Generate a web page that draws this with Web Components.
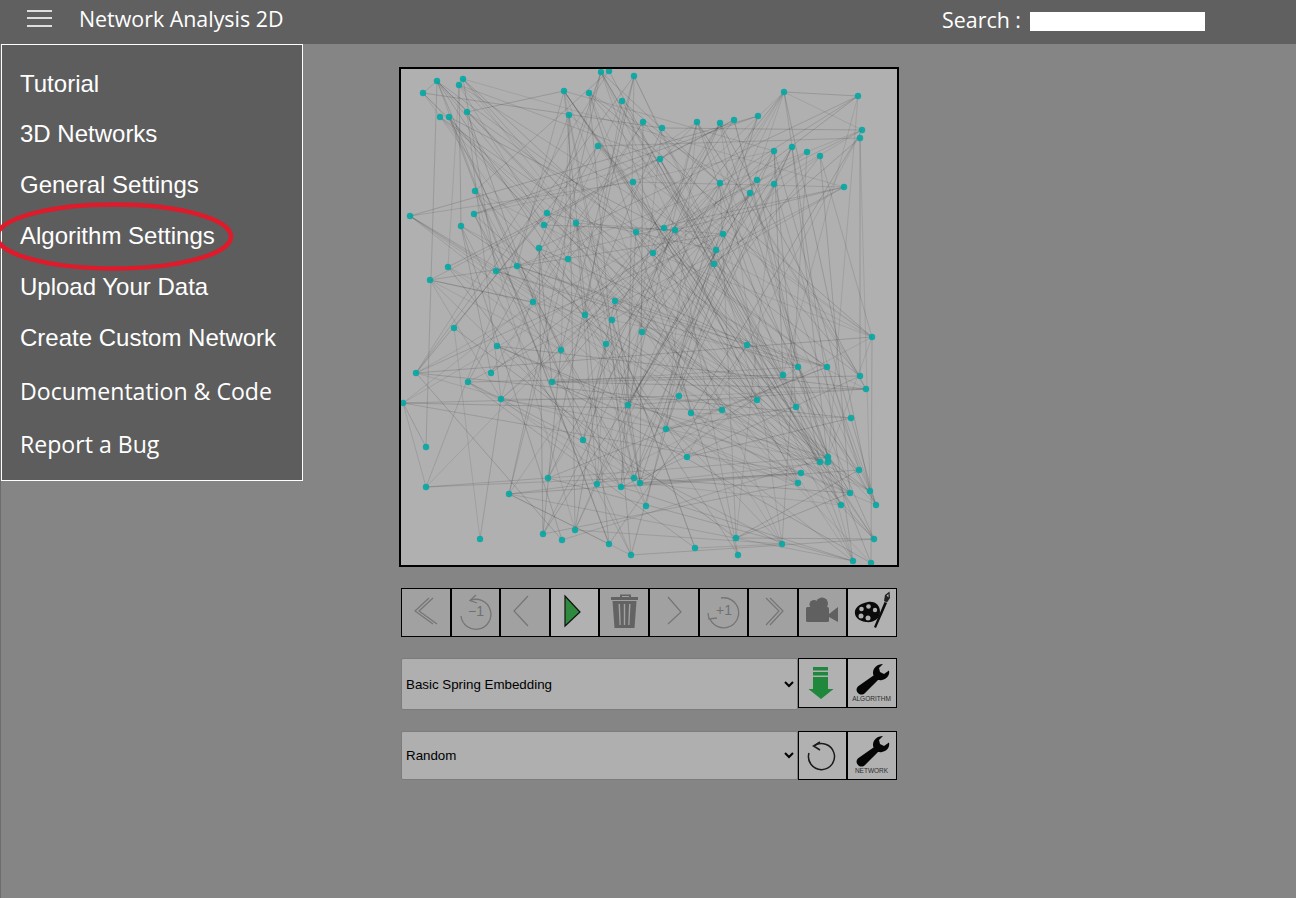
<!DOCTYPE html>
<html>
<head>
<meta charset="utf-8">
<title>Network Analysis 2D</title>
<style>
  html, body { margin: 0; height: 100%; background: #858585; }
</style>
</head>
<body>
<na-app>
  <na-header slot="header" title-text="Network Analysis 2D"></na-header>
  <na-menu slot="menu">
    <na-menu-item>Tutorial</na-menu-item>
    <na-menu-item>3D Networks</na-menu-item>
    <na-menu-item>General Settings</na-menu-item>
    <na-menu-item>Algorithm Settings</na-menu-item>
    <na-menu-item>Upload Your Data</na-menu-item>
    <na-menu-item>Create Custom Network</na-menu-item>
    <na-menu-item alt>Documentation &amp; Code</na-menu-item>
    <na-menu-item alt>Report a Bug</na-menu-item>
  </na-menu>
  <na-network></na-network>
  <na-toolbar>
    <na-tool-button icon="first"></na-tool-button>
    <na-tool-button icon="back1"></na-tool-button>
    <na-tool-button icon="prev"></na-tool-button>
    <na-tool-button icon="play" active></na-tool-button>
    <na-tool-button icon="trash"></na-tool-button>
    <na-tool-button icon="next"></na-tool-button>
    <na-tool-button icon="fwd1"></na-tool-button>
    <na-tool-button icon="last"></na-tool-button>
    <na-tool-button icon="camera"></na-tool-button>
    <na-tool-button icon="palette" active></na-tool-button>
  </na-toolbar>
  <na-select-row value="Basic Spring Embedding" select-height="52">
    <na-tool-button icon="download" active></na-tool-button>
    <na-tool-button icon="wrench" label="ALGORITHM" active></na-tool-button>
  </na-select-row>
  <na-select-row value="Random" select-height="49">
    <na-tool-button icon="undo" active></na-tool-button>
    <na-tool-button icon="wrench" label="NETWORK" active></na-tool-button>
  </na-select-row>
</na-app>

<script>
// icon drawings, 47x47 box
const ICONS = {
  first: `<g fill="none" stroke="#757575" stroke-width="1.2"><path d="M27 9 L13 22 L31 35"/><path d="M31 9 L17 22 L35 35"/></g>`,
  back1: `<g fill="none" stroke="#757575" stroke-width="1.3" transform="translate(-1 0)"><path d="M19 11.500 A15 15 0 1 1 10 27"/><path d="M25 6 L19 11.500 L26 14"/></g><text x="24" y="27" text-anchor="middle" font-family="'Liberation Sans',sans-serif" font-size="14" fill="#707070">−1</text>`,
  prev: `<path d="M27 7 L13 22 L27 37" fill="none" stroke="#757575" stroke-width="1.2"/>`,
  play: `<path d="M14 7 L29 23 L14 37 Z" fill="#2f8a3f" stroke="#111" stroke-width="1.2"/>`,
  trash: `<g fill="#636363"><path d="M19 8 V5.500 H30 V8 H37 V11 H10 V8 Z M21 8 H28 V7 H21 Z" fill-rule="evenodd"/><path d="M11.500 12 H35.500 L33.500 39 H13.500 Z M17.500 15 L18.500 36 H19.800 L19 15 Z M22.800 15 V36 H24.200 V15 Z M28 15 L27.200 36 H28.500 L29.500 15 Z" fill-rule="evenodd"/></g>`,
  next: `<path d="M18 8 L31 23 L18 35" fill="none" stroke="#757575" stroke-width="1.2"/>`,
  fwd1: `<g fill="none" stroke="#757575" stroke-width="1.3" transform="translate(-1 0)"><path d="M22 9 A15 15 0 1 1 11 30"/><path d="M9 24 L10 30 L18 29"/></g><text x="24" y="26" text-anchor="middle" font-family="'Liberation Sans',sans-serif" font-size="14" fill="#707070">+1</text>`,
  last: `<g fill="none" stroke="#757575" stroke-width="1.2"><path d="M17 9 L30 22 L17 36"/><path d="M21 9 L34 22 L21 36"/></g>`,
  camera: `<g fill="#606060"><circle cx="15" cy="15.500" r="4.500"/><circle cx="23" cy="14.500" r="6"/><rect x="7" y="18" width="23" height="15" rx="1.500"/><path d="M30 25 L39 18 V33 L30 28 Z"/></g>`,
  palette: `<path d="M19 13 C27 12 31 17 31 23 C31 30 24 34 17 33 C9 32 5 27 6 22 C7 17 13 14 19 13 Z" fill="#0b0b0b"/><g fill="#b1b1b1"><circle cx="12.500" cy="20" r="2.300"/><circle cx="19.500" cy="17.500" r="2.300"/><circle cx="26" cy="21" r="2.200"/><circle cx="12" cy="27" r="2.500"/><circle cx="19" cy="29" r="2.500"/></g><path d="M25 38 L35.500 13 L38 14 L27 39 Z" fill="#0b0b0b"/><path d="M35 12 L36 6 L40.500 2.500 L41 9 L38 13.500 Z" fill="#222"/><path d="M37.500 6.500 L39.500 5 L39.500 8.500 Z" fill="#b1b1b1"/>`,
  download: `<g fill="#20883c"><rect x="14" y="7" width="15" height="3.500"/><rect x="14" y="12" width="15" height="3.500"/><path d="M14 17 H29 V29 H34.500 L22 39 L9.500 29 H14 Z"/></g>`,
  undo: `<g fill="none" stroke="#1a1a1a" stroke-width="1.500"><path d="M15 14 A13 13 0 1 1 10 21"/><path d="M21 10 L14.500 14 L21 18"/></g>`,
  wrench: `<path d="M34 4 C28 4 24 8 24 13 C24 14 24.500 15 24.500 15.500 L9.500 26 C7 28 7 31 9 33 C11 35 14 35 16 33 L29 20 C30 20 31 20.500 33 20 C38 19 41 15 40 10.500 L35 14 L31 12 L30 8 Z" fill="#050505"/>`
}

class NaApp extends HTMLElement {
  constructor() {
    super()
    this.attachShadow({ mode: 'open' })
    this.shadowRoot.innerHTML = `
      <style>
        :host { display: block; position: relative; height: 898px; overflow: hidden; background: #858585;
          box-shadow: inset 1px 0 0 #6c6c6c; }
        main { display: flex; flex-direction: column; width: 496px; margin: 23px 0 0 401px; }
        ::slotted(na-toolbar) { margin-top: 21px; }
        ::slotted(na-select-row) { margin-top: 21px; }
        ::slotted(na-network) { margin: 0 -2px; }
      </style>
      <slot name="header"></slot>
      <slot name="menu"></slot>
      <main><slot></slot></main>
    `
  }
}

class NaHeader extends HTMLElement {
  constructor() {
    super()
    this.attachShadow({ mode: 'open' })
  }
  connectedCallback() {
    this.shadowRoot.innerHTML = `
      <style>
        :host { display: flex; align-items: center; height: 44px; box-sizing: border-box; padding-bottom: 8px;
          background: #606060; color: #fff; font-family: "Open Sans", sans-serif; font-size: 21.400px; }
        .burger { display: flex; flex-direction: column; gap: 5.500px; width: 25px; margin-left: 27px; }
        .burger i { display: block; height: 2px; background: #dedede; }
        .title { margin-left: 27px; }
        .search { display: flex; align-items: center; margin-left: auto; margin-right: 91px; margin-top: 2px; }
        .search span { margin-right: 9px; }
        input { width: 175px; height: 19px; padding: 0; border: 0; margin: 5px 0 0; background: #fff; box-sizing: border-box; }
      </style>
      <div class="burger"><i></i><i></i><i></i></div>
      <div class="title">${this.getAttribute('title-text')}</div>
      <div class="search"><span>Search :</span><input type="text"></div>
    `
  }
}

class NaMenu extends HTMLElement {
  constructor() {
    super()
    this.attachShadow({ mode: 'open' })
    this.shadowRoot.innerHTML = `
      <style>
        :host { display: block; position: absolute; left: 1px; top: 44px; width: 302px; height: 437px;
          box-sizing: border-box; border: 1px solid #fff; background: #5d5d5d; padding-top: 13px; z-index: 2; }
        svg { position: absolute; left: -1px; top: -1px; overflow: visible; pointer-events: none; }
      </style>
      <slot></slot>
      <svg width="240" height="240"><ellipse cx="113" cy="192.500" rx="117" ry="32" fill="none" stroke="#de1a2b" stroke-width="4.500"/></svg>
    `
  }
}

class NaMenuItem extends HTMLElement {
  constructor() {
    super()
    this.attachShadow({ mode: 'open' })
    this.shadowRoot.innerHTML = `
      <style>
        :host { display: block; height: 51px; line-height: 51px; padding-left: 18px; color: #fff;
          font-family: "Liberation Sans", Arial, sans-serif; font-size: 24px; white-space: nowrap; }
        :host(:first-child) { height: 50px; }
        :host([alt]) { height: 53px; line-height: 56px; font-family: "Open Sans", sans-serif; font-size: 23.100px; }
      </style>
      <slot></slot>
    `
  }
}

class NaNetwork extends HTMLElement {
  constructor() {
    super()
    this.attachShadow({ mode: 'open' })
  }
  connectedCallback() {
    // node positions read off the picture, page coords
    const pts = [[437,81],[463,79],[459,85],[423,93],[564,91],[589,93],[601,72],[609,71],[634,76],[622,101],[467,112],[440,117],[449,117],[569,115],[643,122],[598,146],[633,182],[475,191],[410,216],[474,214],[461,226],[547,213],[544,225],[576,223],[636,232],[653,253],[539,248],[568,259],[448,267],[517,266],[496,271],[430,280],[533,302],[615,301],[585,315],[612,320],
      [784,92],[858,96],[862,130],[860,138],[758,116],[734,120],[720,123],[697,122],[662,128],[774,151],[792,147],[807,152],[820,156],[660,159],[844,187],[757,180],[774,184],[720,183],[750,193],[664,228],[675,230],[723,234],[716,250],[714,264],
      [454,328],[497,346],[561,350],[606,344],[642,332],[416,373],[491,373],[468,382],[552,382],[501,399],[403,403],[628,405],[426,447],[583,440],[426,487],[548,478],[597,484],[621,487],[634,478],[640,483],[509,494],[646,506],[543,534],[562,540],[575,530],[609,544],[480,539],[631,555],
      [872,337],[747,345],[783,375],[798,367],[827,367],[860,376],[866,389],[679,396],[691,413],[722,410],[757,400],[796,407],[851,418],[666,429],[687,457],[828,457],[820,462],[828,462],[859,470],[801,473],[798,483],[870,491],[850,493],[876,505],[841,505],[874,539],[736,538],[695,548],[782,544],[738,555],[853,561],[871,563]]
    const ox = 401, oy = 69
    const near = xy => {
      let best = 0
      pts.forEach((p, i) => { if (Math.hypot(p[0] - xy[0], p[1] - xy[1]) < Math.hypot(pts[best][0] - xy[0], pts[best][1] - xy[1])) best = i })
      return best
    }
    // edges you can pick out clearly
    const traced = [[[784,92],[858,96]],[[784,92],[862,130]],[[662,128],[862,130]],[[784,92],[750,193]],[[564,91],[467,112]],[[437,81],[423,93]],[[437,81],[426,447]],
      [[423,93],[662,128]],[[459,85],[461,226]],[[459,85],[448,267]],[[410,216],[633,182]],[[410,216],[533,302]],[[430,280],[723,234]],[[430,280],[533,302]],[[403,403],[679,396]],[[403,403],[426,487]],[[403,403],[426,447]],[[403,403],[722,410]],
      [[426,487],[548,478]],[[426,487],[634,478]],[[509,494],[853,561]],[[480,539],[454,328]],[[480,539],[501,399]],[[509,494],[609,544]],[[575,530],[782,544]],[[695,548],[782,544]],[[736,538],[874,539]],[[631,555],[874,539]],
      [[872,337],[416,373]],[[872,337],[871,563]],[[860,376],[552,382]],[[866,389],[679,396]],[[851,418],[691,413]],[[858,96],[720,183]],[[860,138],[870,491]],[[860,138],[860,376]],[[862,130],[664,228]],[[844,187],[675,230]],[[874,539],[747,345]],[[820,462],[691,413]],[[798,483],[691,413]]]
    let lines = traced.map(([a, b]) => [near(a), near(b)])
    // the rest of the web, repeatable
    let seed = 90210
    const rnd = n => {
      seed = (seed + 0x6D2B79F5) | 0
      let t = Math.imul(seed ^ (seed >>> 15), 1 | seed)
      t = (t + Math.imul(t ^ (t >>> 7), 61 | t)) ^ t
      return ((t ^ (t >>> 14)) >>> 0) % n
    }
    const deg = pts.map(() => 0)
    const cap = pts.map(() => 3 + rnd(9))
    const seen = new Set()
    lines.forEach(([a, b]) => { deg[a]++; deg[b]++; seen.add(Math.min(a, b) + '-' + Math.max(a, b)) })
    cap[near([480,539])] = 0
    cap[near([426,447])] = 0
    const rim = (p, q) => (p[1] < 135 && q[1] < 135) || (p[1] > 500 && q[1] > 500) || (p[0] < 445 && q[0] < 445) || (p[0] > 835 && q[0] > 835)
    let tries = 0
    while (lines.length < 345 && tries++ < 30000) {
      const a = rnd(pts.length), b = rnd(pts.length)
      const key = Math.min(a, b) + '-' + Math.max(a, b)
      if (a === b || seen.has(key) || deg[a] >= cap[a] || deg[b] >= cap[b]) continue
      if (rim(pts[a], pts[b])) continue
      if (Math.hypot(pts[a][0] - pts[b][0], pts[a][1] - pts[b][1]) < 120) continue
      seen.add(key)
      deg[a]++; deg[b]++
      lines.push([a, b])
    }
    const lineMarkup = lines.map(([a, b]) => {
      const w = (rnd(4) + 5) / 10
      return `<line x1="${pts[a][0] - ox}" y1="${pts[a][1] - oy}" x2="${pts[b][0] - ox}" y2="${pts[b][1] - oy}" stroke-width="${w}"/>`
    }).join('')
    const dots = pts.map(p => `<circle cx="${p[0] - ox}" cy="${p[1] - oy}" r="3.200"/>`).join('')
    this.shadowRoot.innerHTML = `
      <style>
        :host { display: block; width: 500px; height: 500px; box-sizing: border-box; border: 2px solid #000; background: #b0b0b0; }
        svg { display: block; }
        .edges { stroke: #3f3f3f; stroke-opacity: .28; }
        .nodes { fill: #08a8a4; fill-opacity: .92; }
      </style>
      <svg width="496" height="496" viewBox="0 0 496 496">
        <g class="edges">${lineMarkup}</g>
        <g class="nodes">${dots}</g>
      </svg>
    `
  }
}

class NaToolbar extends HTMLElement {
  constructor() {
    super()
    this.attachShadow({ mode: 'open' })
    this.shadowRoot.innerHTML = `
      <style>
        :host { display: grid; grid-template-columns: repeat(10, 1fr); height: 49px; }
      </style>
      <slot></slot>
    `
  }
}

class NaToolButton extends HTMLElement {
  constructor() {
    super()
    this.attachShadow({ mode: 'open' })
  }
  connectedCallback() {
    const icon = ICONS[this.getAttribute('icon')] || ''
    const label = this.getAttribute('label')
    const labelMarkup = label
      ? `<text x="22.500" y="40.500" text-anchor="middle" font-family="'Liberation Sans',sans-serif" font-size="6.500" fill="#2c2c2c">${label}</text>`
      : ''
    this.shadowRoot.innerHTML = `
      <style>
        :host { display: flex; align-items: center; justify-content: center; box-sizing: border-box;
          border: 1px solid #000; background: #a1a1a1; min-width: 0; }
        :host([active]) { background: #b1b1b1; }
        svg { display: block; width: 47px; height: 47px; overflow: visible; }
      </style>
      <svg viewBox="0 0 47 47">${icon}${labelMarkup}</svg>
    `
  }
}

class NaSelectRow extends HTMLElement {
  constructor() {
    super()
    this.attachShadow({ mode: 'open' })
  }
  connectedCallback() {
    const h = this.getAttribute('select-height')
    this.shadowRoot.innerHTML = `
      <style>
        :host { display: flex; align-items: flex-start; }
        select { width: 397px; height: ${h}px; flex: none; box-sizing: border-box; padding-left: 0; margin: 0;
          background: #afafaf; border: 1px solid #7c7c7c; border-radius: 2px; color: #000;
          font-family: "Liberation Sans", Arial, sans-serif; font-size: 13.330px; }
        .btns { display: grid; grid-template-columns: 49px 50px; height: 50px; }
        :host([value="Random"]) .btns { height: 49px; }
      </style>
      <select><option>${this.getAttribute('value')}</option></select>
      <div class="btns"><slot></slot></div>
    `
  }
}

customElements.define('na-app', NaApp)
customElements.define('na-header', NaHeader)
customElements.define('na-menu', NaMenu)
customElements.define('na-menu-item', NaMenuItem)
customElements.define('na-network', NaNetwork)
customElements.define('na-toolbar', NaToolbar)
customElements.define('na-tool-button', NaToolButton)
customElements.define('na-select-row', NaSelectRow)
</script>
</body>
</html>
